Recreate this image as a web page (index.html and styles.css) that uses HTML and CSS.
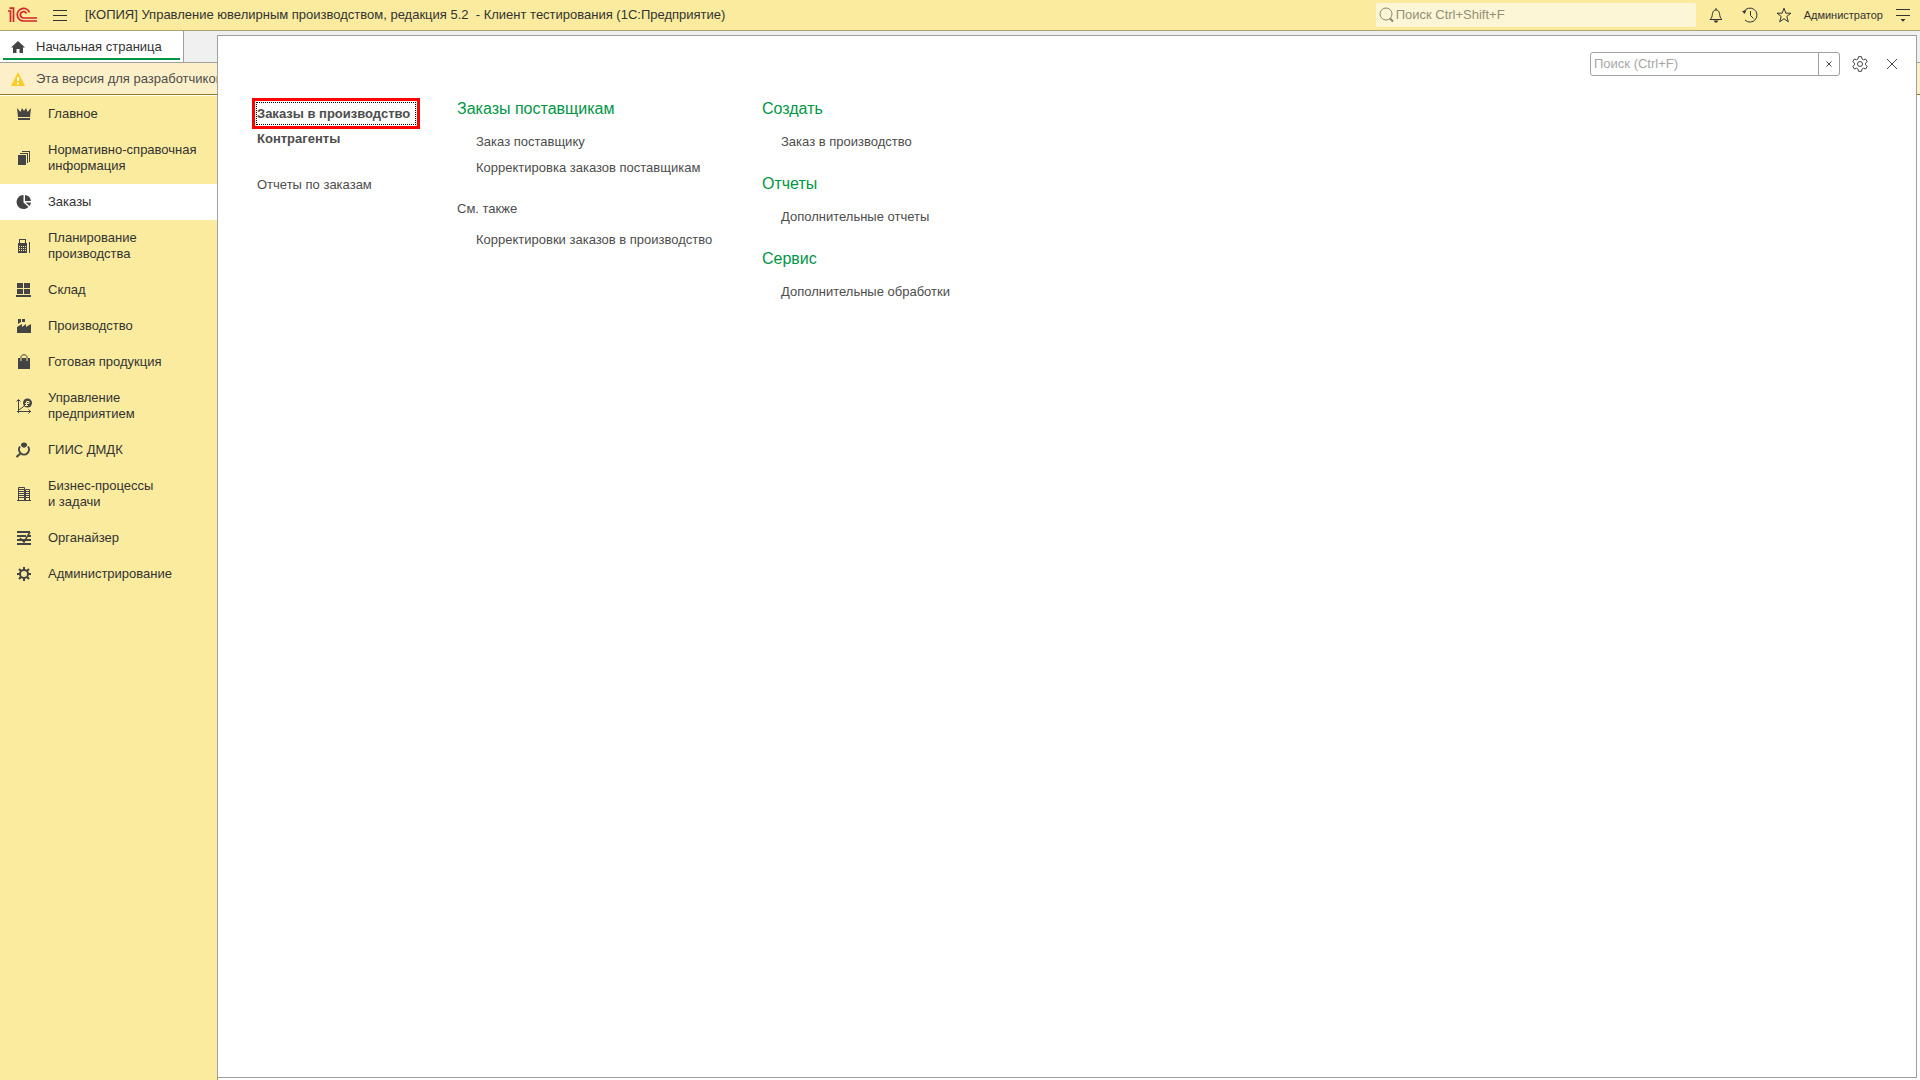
FILE: index.html
```html
<!DOCTYPE html>
<html lang="ru">
<head>
<meta charset="utf-8">
<title>Управление ювелирным производством</title>
<link rel="stylesheet" href="styles.css">
</head>
<body>
<header class="topbar">
  <svg class="logo" width="30" height="16" viewBox="0 0 30 16" fill="none" stroke="#d8232a" stroke-width="1.700"><path d="M0 4H2.500V15M1.500 1.200H5.500V15"/><path d="M21.500 5.500A6.300 6.300 0 1 0 15.500 14H29"/><path d="M18.500 6.500A3.200 3.200 0 1 0 15.500 11H29"/></svg>
  <button class="icon-btn menu-btn" aria-label="Меню"><svg width="14" height="13" viewBox="0 0 14 13" stroke="#333"><path d="M0 1.500H14M0 6.500H14M0 11.500H14"/></svg></button>
  <h1 class="title">[КОПИЯ] Управление ювелирным производством, редакция 5.2 &nbsp;- Клиент тестирования (1С:Предприятие)</h1>
  <label class="global-search">
    <svg width="15" height="16" viewBox="0 0 15 16" fill="none" stroke="#8b8566"><circle cx="7" cy="7" r="6"/><path d="m11 11.500 3 3" stroke-width="2"/></svg>
    <input type="text" placeholder="Поиск Ctrl+Shift+F" aria-label="Поиск">
  </label>
  <div class="tools">
    <button class="icon-btn" aria-label="Уведомления"><svg width="16" height="16" viewBox="0 0 16 16" fill="none" stroke="#333"><path d="M8 1v2M2 12.500h12c-2-1.500-2-3-2.500-6C11 4 9.800 3 8 3S5 4 4.500 6.500C4 9.500 4 11 2 12.500Z"/><path d="M5.500 13.500h5L9 15.500H7Z" fill="#333" stroke="none"/></svg></button>
    <button class="icon-btn" aria-label="История"><svg width="16" height="16" viewBox="0 0 16 16" fill="none" stroke="#333"><path d="M1.800 4.800A7 7 0 1 1 3 13M8.500 4v4.500l3 3"/><path d="M0 4 4.500 3.500 2.500 7Z" fill="#333" stroke="none"/></svg></button>
    <button class="icon-btn" aria-label="Избранное"><svg width="16" height="16" viewBox="0 0 16 16" fill="none" stroke="#333"><path d="m8 1.200 1.800 5h5.200l-4.200 3.200 1.500 5.400L8 11.700l-4.300 3.100 1.500-5.400L1 6.200h5.200Z"/></svg></button>
  </div>
  <a class="user" href="#">Администратор</a>
  <button class="icon-btn" aria-label="Сервис и настройки"><svg width="14" height="13" viewBox="0 0 14 13" stroke="#333"><path d="M0 .5H14M0 6.500H14"/><path d="M4.500 10h5L7 12.800Z" fill="#333" stroke="none"/></svg></button>
</header>

<div class="tabs">
  <a class="tab" href="#"><svg width="14" height="12" viewBox="0 0 14 12" fill="#444"><path d="M7 0 14 6.500H12V12H8.500V8H5.500V12H2V6.500H0Z"/></svg><span>Начальная страница</span></a>
</div>

<div class="notice">
  <svg width="14" height="14" viewBox="0 0 14 14"><path d="M7 0 14 14H0Z" fill="#fccb26"/><path d="M7 5v4M7 10.500v2" stroke="#fff" stroke-width="2"/></svg>
  <span>Эта версия для разработчиков</span>
</div>

<main class="workspace">
  <nav class="sidebar">
    <a href="#"><svg width="16" height="16" viewBox="0 0 16 16" fill="#444"><path d="m1 2 3.500 4L6 2l2 3 2-3 1.500 4L15 2l-1 9H2ZM2 12h12v2H2Z"/></svg><span>Главное</span></a>
    <a href="#"><svg width="16" height="16" viewBox="0 0 16 16" fill="#444"><path d="M2 5h8v10H2ZM4 3h8v10h-1V4H4ZM6 1h8v11h-1V2H6Z"/></svg><span>Нормативно-справочная информация</span></a>
    <a class="active" href="#"><svg width="16" height="16" viewBox="0 0 16 16" fill="#444"><path d="M7.500 1v7.500l5 4.500A7 7 0 1 1 7.500 1Z"/><path d="M9 1a7 7 0 0 1 6 6H9ZM9.500 8.500H15a7 7 0 0 1-1.500 3.500Z"/></svg><span>Заказы</span></a>
    <a href="#"><svg width="16" height="16" viewBox="0 0 16 16" fill="#444"><path d="M2 5h1V1h7v4h1v10H2ZM4 2v3h5V2ZM13 4h1v11h-1Z" fill-rule="evenodd"/><path d="M3 8.500h7M3 10.500h7M3 12.500h7" stroke="#faeb9e" stroke-dasharray="1 1"/></svg><span>Планирование производства</span></a>
    <a href="#"><svg width="16" height="16" viewBox="0 0 16 16" fill="#444"><path d="M1 1h6v5H1ZM8 1h6v5H8ZM1 7h6v5H1ZM8 7h6v5H8ZM0 13h15v2H0Z"/></svg><span>Склад</span></a>
    <a href="#"><svg width="16" height="16" viewBox="0 0 16 16" fill="#444"><path d="M1 15V9l5-3v3l4-3v3l5-3v9ZM2 1h3v3L2 6ZM6 1h3v3L6 4Z"/></svg><span>Производство</span></a>
    <a href="#"><svg width="16" height="16" viewBox="0 0 16 16" fill="#444"><path d="M2 4h12v11H2Z"/><path d="M5 7V3c0-3 6-3 6 0v4" fill="none" stroke="#faeb9e" stroke-width="2"/><path d="M5 7V3c0-3 6-3 6 0v4" fill="none" stroke="#444"/></svg><span>Готовая продукция</span></a>
    <a href="#"><svg width="16" height="16" viewBox="0 0 16 16" fill="none" stroke="#444"><path d="M2.500 2v13M1 13.500h14M.5 3.500l2-2 2 2M12.500 11.500l2 2-2 2M3 12l4-3 2-2"/><circle cx="11.500" cy="5" r="4.500" fill="#444" stroke="none"/><path d="M10.500 8V3.500h2.500v2h-4M9 7.500h3" stroke="#faeb9e"/></svg><span>Управление предприятием</span></a>
    <a href="#"><svg width="16" height="16" viewBox="0 0 16 16" fill="none" stroke="#444" stroke-width="2"><path d="M4 4.500a5 5 0 1 0 8 0M4 12l-3.500 3"/><path d="M5 2 7 .5h2L11 2v2L8 6 5 4Z" fill="#444" stroke="none"/></svg><span>ГИИС ДМДК</span></a>
    <a href="#"><svg width="16" height="16" viewBox="0 0 16 16" fill="none" stroke="#444"><path d="M2.500 15V1.500h6V15M9.500 15V3.500h4V15M1 14.500h14M3 3.500h6M3 5.500h6M3 7.500h6M3 9.500h6M3 11.500h6M10 5.500h4M10 7.500h4M10 9.500h4M10 11.500h4"/></svg><span>Бизнес-процессы<br>и задачи</span></a>
    <a href="#"><svg width="16" height="16" viewBox="0 0 16 16" fill="none" stroke="#444" stroke-width="2"><path d="M1 2h13M1 6h9M12 6h3M1 10h14M1 14h14"/><path d="m4 8 4 4 6-10" stroke-width="1.500"/></svg><span>Органайзер</span></a>
    <a href="#"><svg width="16" height="16" viewBox="0 0 16 16" fill="none" stroke="#444" stroke-width="2"><circle cx="8" cy="8" r="4"/><path d="M8 1v3M8 12v3M1 8h3M12 8h3M3 3l2 2M11 11l2 2M13 3l-2 2M5 11l-2 2"/></svg><span>Администрирование</span></a>
  </nav>
</main>

<section class="panel" aria-label="Заказы">
  <div class="panel-tools">
    <div class="panel-search">
      <input type="text" placeholder="Поиск (Ctrl+F)" aria-label="Поиск в разделе">
      <button aria-label="Очистить"><svg width="6" height="6" viewBox="0 0 6 6" stroke="#444"><path d="m.5.5 5 5m0-5-5 5"/></svg></button>
    </div>
    <button class="icon-btn" aria-label="Настройка"><svg width="16" height="16" viewBox="0 0 16 16" fill="none" stroke="#444"><path d="M6.500.7h3l.5 2.200 1.500.9 2.200-.8 1.500 2.700-1.700 1.500v1.600l1.700 1.500-1.500 2.700-2.200-.8-1.500.9-.5 2.200h-3L6 13.100l-1.500-.9-2.200.8L.8 10.300l1.700-1.500V7.200L.8 5.700 2.300 3l2.200.8L6 2.900Z"/><circle cx="8" cy="8" r="2.500"/></svg></button>
    <button class="icon-btn" aria-label="Закрыть"><svg width="10" height="10" viewBox="0 0 10 10" stroke="#444"><path d="m0 0 10 10M10 0 0 10"/></svg></button>
  </div>
  <div class="columns">
    <div class="col main-col">
      <div class="links">
        <a class="strong focused" href="#">Заказы в производство</a>
        <a class="strong" href="#">Контрагенты</a>
      </div>
      <div class="links"><a href="#">Отчеты по заказам</a></div>
    </div>
    <div class="col supply-col">
      <section>
        <h2>Заказы поставщикам</h2>
        <div class="links"><a href="#">Заказ поставщику</a><a href="#">Корректировка заказов поставщикам</a></div>
      </section>
      <section>
        <h3>См. также</h3>
        <div class="links"><a href="#">Корректировки заказов в производство</a></div>
      </section>
    </div>
    <div class="col">
      <section>
        <h2>Создать</h2>
        <div class="links"><a href="#">Заказ в производство</a></div>
      </section>
      <section>
        <h2>Отчеты</h2>
        <div class="links"><a href="#">Дополнительные отчеты</a></div>
      </section>
      <section>
        <h2>Сервис</h2>
        <div class="links"><a href="#">Дополнительные обработки</a></div>
      </section>
    </div>
  </div>
</section>
</body>
</html>
```
FILE: styles.css
```css
* { box-sizing: border-box; }
body {
  position: relative;
  display: flex;
  flex-direction: column;
  min-height: 100vh;
  margin: 0;
  background: #fff;
  color: #333;
  font: 13px/16px "Liberation Sans", Arial, sans-serif;
}
a { color: inherit; text-decoration: none; }
svg { display: block; flex: none; }
button, input { padding: 0; border: 0; background: none; font: inherit; color: inherit; }
.icon-btn { display: flex; align-items: center; justify-content: center; }

.topbar {
  display: flex;
  align-items: center;
  height: 31px;
  padding: 0 10px 0 8px;
  border-bottom: 1px solid #aca469;
  background: #faeb9e;
}
.menu-btn { margin: 0 18px 0 15px; }
.title { flex: 1; margin: 0; font-size: 13px; font-weight: 400; white-space: nowrap; }
.global-search {
  display: flex;
  align-items: center;
  gap: 2px;
  width: 320px;
  height: 24px;
  padding-left: 3px;
  border-radius: 2px;
  background: #fdf6d6;
}
.global-search input { flex: 1; }
.global-search input::placeholder { color: #948f77; }
.tools { display: flex; gap: 18px; margin: 0 12px; }
.user { margin-right: 13px; font-size: 11px; }

.tabs { height: 32px; border-bottom: 1px solid #a0a0a0; background: #f0f0f0; }
.tab {
  display: flex;
  align-items: center;
  gap: 11px;
  width: 184px;
  height: 31px;
  padding-left: 11px;
  border-right: 1px solid #a0a0a0;
  background: linear-gradient(#009646, #009646) 3px 27px / 177px 2px no-repeat #fff;
}

.notice {
  display: flex;
  align-items: center;
  gap: 11px;
  height: 32px;
  padding-left: 11px;
  border-bottom: 1px solid #967a1c;
  background: #fdf0c8;
  color: #4d4d4d;
}
.workspace { flex: 1; display: flex; padding-top: 1px; }
.sidebar { width: 218px; border-right: 1px solid #9a9054; background: #faeb9e; }
.sidebar a {
  display: flex;
  align-items: center;
  gap: 16px;
  padding: 10px 8px 10px 16px;
}
.sidebar .active { background: #fff; }

/* Section command panel, opened over the workspace */
.panel {
  position: absolute;
  top: 35px;
  right: 3px;
  bottom: 2px;
  left: 217px;
  border: 1px solid #a0a0a0;
  background: #fff;
  color: #4d4d4d;
}
.panel-tools {
  display: flex;
  align-items: center;
  justify-content: flex-end;
  gap: 12px;
  padding: 16px 14px 0 0;
}
.panel-tools .icon-btn { width: 20px; height: 24px; }
.panel-search {
  display: flex;
  width: 250px;
  height: 24px;
  margin-right: -2px;
  border: 1px solid #a0a0a0;
  border-radius: 3px;
}
.panel-search input { flex: 1; min-width: 0; padding-left: 3px; }
.panel-search input::placeholder { color: #a6a6a6; }
.panel-search button {
  display: flex;
  align-items: center;
  justify-content: center;
  width: 21px;
  border-left: 1px solid #a0a0a0;
}
.columns { display: flex; padding: 20px 39px; }
.col { display: flex; flex-direction: column; gap: 16px; }
.main-col { width: 200px; padding-top: 4px; gap: 20px; }
.supply-col { width: 305px; }
.links { display: flex; flex-direction: column; align-items: flex-start; }
.links a { line-height: 26px; white-space: nowrap; }
.strong { font-weight: 700; }
.links .focused {
  min-width: 160px;
  margin: 2px 0 1px -1px;
  border: 1px dotted #000;
  box-shadow: 0 0 0 1px #fff, 0 0 0 4px #f00;
  line-height: 21px;
}
h2 { margin: 0 0 7px; color: #009646; font-size: 16px; font-weight: 400; line-height: 26px; }
h3 { margin: 0 0 6px; font-size: 13px; font-weight: 400; line-height: 24px; }
.col section .links { padding-left: 19px; }
```
